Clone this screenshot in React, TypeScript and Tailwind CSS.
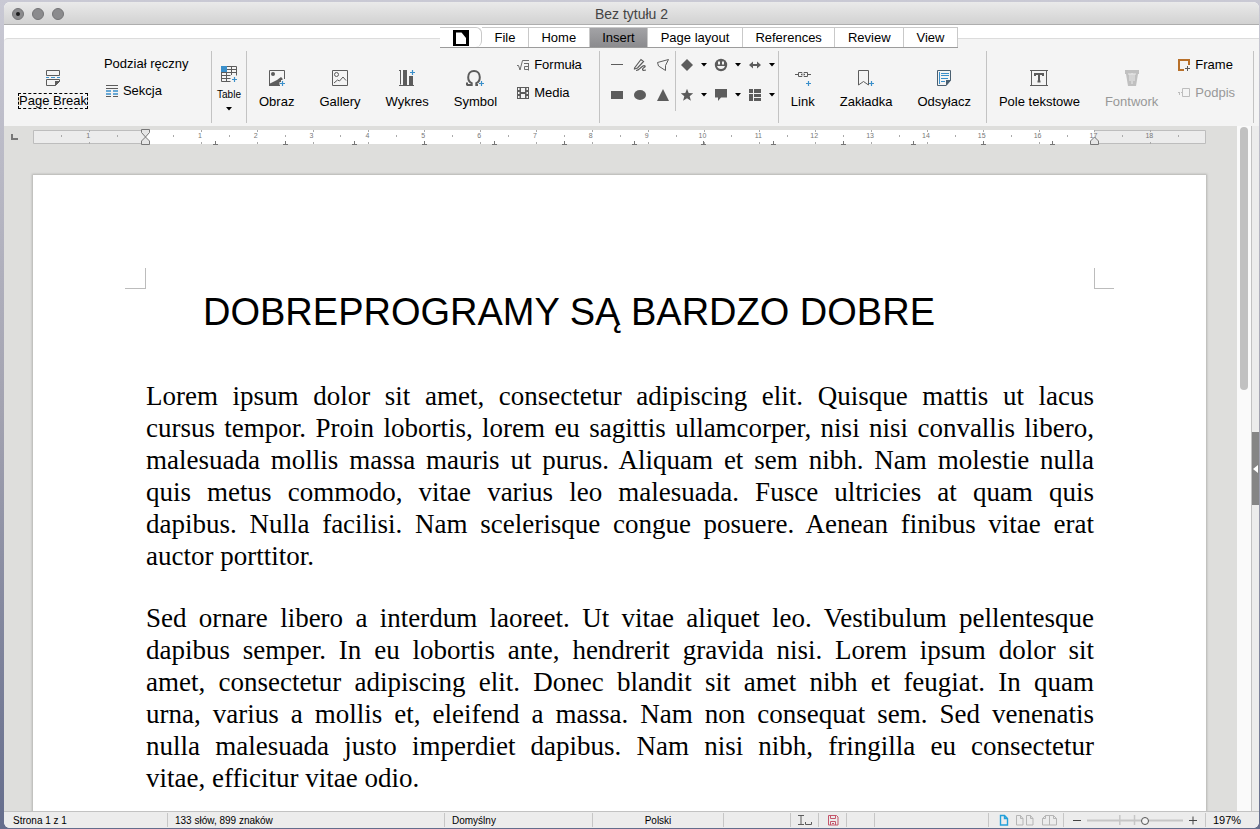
import React from "react";

type IconProps = { children: React.ReactNode; className?: string; box?: string };

function Icon({ children, className = "size-4", box = "0 0 16 16" }: IconProps) {
  return (
    <svg viewBox={box} className={`${className} shrink-0`} fill="none" aria-hidden="true">
      {children}
    </svg>
  );
}

const G = "#5c5c5c";
const B = "#3a8fca";

function Plus({ x, y, c = B }: { x: number; y: number; c?: string }) {
  return <path d={`M${x - 2.5} ${y}h5M${x} ${y - 2.5}v5`} stroke={c} strokeWidth="1.200" />;
}

const icons = {
  pageBreak: (
    <Icon>
      <path d="M1.500 .5h13v5h-13z" stroke={G} />
      <path d="M1 7.500h3M6 7.500h4M12 7.500h3" stroke={B} />
      <path d="M1.500 9.500h13v2l-4 4h-9z" stroke={G} />
      <path d="M10 11h5l-5 5z" fill={G} />
    </Icon>
  ),
  table: (
    <Icon>
      <path d="M.5 .5h15v9M.5 .5v15h9M.5 3.500h15M.5 6.500h15M.5 9.500h9M.5 12.500h9M5.500 0v15M10.500 0v9" stroke={G} />
      <path d="M0 0h6v6H0z" fill={B} />
      <Plus x={13.5} y={13.5} />
    </Icon>
  ),
  image: (
    <Icon>
      <path d="M.5 15.500V.5h15V9" stroke={G} />
      <circle cx="4" cy="4" r="2" fill={G} />
      <path d="M0 16v-2l5-2.500 3-1.500 4-3 1.500 1.500V10H12v2h-1.500v3H11v1z" fill={G} />
      <Plus x={13.5} y={13.5} />
    </Icon>
  ),
  gallery: (
    <Icon>
      <path d="M.5 .5h15v15H.5z" stroke={G} />
      <circle cx="4.500" cy="4.500" r="2" stroke={G} />
      <path d="M2 13l3.500-3 2 1 3.500-4 3 3.500" stroke={G} />
    </Icon>
  ),
  chart: (
    <Icon>
      <path d="M0 .5h1.500M1.500 0v14.500M0 15.500h15" stroke={G} />
      <path d="M4 0h4v15H4zM10 6h4v9h-4z" fill={G} />
      <Plus x={13.5} y={2.5} />
    </Icon>
  ),
  symbol: (
    <Icon className="h-4 w-5" box="0 0 20 16">
      <path
        d="M1.500 15h5.200v-1.800C4.200 12 3.200 9.700 3.200 7.200 3.200 3.500 5.500 1 9 1s5.800 2.500 5.800 6.200c0 2.500-1 4.800-3.500 6V15H13M2 12.500V15"
        stroke={G}
        strokeWidth="2"
      />
      <Plus x={16.5} y={13.5} />
    </Icon>
  ),
  link: (
    <Icon>
      <path d="M0 4.500h3M5 2.500H3.500v4H7v-1M5 2.500h2v1M13 4.500h3M11 2.500h1.500v4H9v-1M11 2.500H9v1M6 4.500h1.500M8.500 4.500H10" stroke={G} />
      <Plus x={13.5} y={13.5} />
    </Icon>
  ),
  bookmark: (
    <Icon>
      <path d="M.5 .5h10v14.500l-5-3.500-5 3.500z" stroke={G} />
      <Plus x={13.5} y={13.5} />
    </Icon>
  ),
  reference: (
    <Icon>
      <path d="M1.500 .5h13v10l-4.500 5H1.500z" stroke="#4a5f70" />
      <path d="M10 10h5l-5 6z" fill="#4a5f70" />
      <path d="M3.500 2v12M5 3.500h8M5 5.500h8M5 8.500h7M5 11.500h4" stroke={B} />
    </Icon>
  ),
  textBox: (
    <Icon className="h-4 w-[18px]" box="0 0 18 16">
      <path d="M1.500 0v16M16.500 0v16M0 .5h18M0 15.500h18" stroke={G} />
      <path d="M5 6V4h8v2M9 4v8M7.500 11.500h3" stroke={G} strokeWidth="2" />
    </Icon>
  ),
  fontwork: (
    <Icon>
      <path d="M1 0h14v4h-1l-2 12H4L2 4H1z" fill="#c0c0c0" />
      <path d="M4 4h8M8 3v11M6 4v7M10 4v7" stroke="#e9e9e9" />
    </Icon>
  ),
  section: (
    <Icon className="size-3" box="0 0 12 12">
      <path d="M0 .5h12M0 3.500h12" stroke={G} />
      <path d="M0 6h5M7 6h5M0 9h5M7 9h5" stroke={B} strokeWidth="1.600" />
      <path d="M0 11.500h5M7 11.500h5" stroke={G} />
    </Icon>
  ),
  formula: (
    <Icon className="size-3" box="0 0 12 12">
      <path d="M0 6.500h1.500l1.500 4.500L5.500 1.500H12M11.500 4v7.500M7 4.500h4.500M11.500 7.500H7.500v3h4" stroke="#6d6d6d" />
    </Icon>
  ),
  media: (
    <Icon className="size-3" box="0 0 12 12">
      <path d="M0 0h12v12H0z" fill={G} />
      <path d="M4 1h4v4H4zM4 7h4v4H4zM1 1h1.500v2H1zM1 5h1.500v2H1zM1 9h1.500v2H1zM9.500 1H11v2H9.500zM9.500 5H11v2H9.500zM9.500 9H11v2H9.500z" fill="#f4f4f4" />
    </Icon>
  ),
  frame: (
    <Icon className="size-3" box="0 0 12 12">
      <path d="M6 11H1V1h10v5" stroke="#b8702a" strokeWidth="2" />
      <path d="M9.500 7v5M7 9.500h5" stroke={G} />
    </Icon>
  ),
  caption: (
    <Icon className="size-3" box="0 0 12 12">
      <path d="M4.500 1.500h7v8h-7zM0 5.500h2M3 5.500h1M1.500 6v2" stroke="#bdbdbd" />
    </Icon>
  ),
  line: (
    <Icon className="size-3.5" box="0 0 14 14">
      <path d="M1 6.500h12" stroke={G} />
    </Icon>
  ),
  pencil: (
    <Icon className="size-3.5" box="0 0 14 14">
      <path d="M1.500 10L8 1.500l2.500 2L4.500 10l-3 1zM3 12.500c2.500 0 3.500-1.500 5-3s3-2.500 4-1.500-2.500 1.800-2.500 3.200 1.500 1.300 3.500 .8" stroke={G} strokeWidth="1.200" />
    </Icon>
  ),
  polygon: (
    <Icon className="size-3.5" box="0 0 14 14">
      <path d="M12.500 1.500l-11 3 1 3.500 7 4.500v-5z" stroke={G} />
    </Icon>
  ),
  rect: (
    <Icon className="size-3.5" box="0 0 14 14">
      <path d="M1 3h12v8H1z" fill={G} />
    </Icon>
  ),
  ellipse: (
    <Icon className="size-3.5" box="0 0 14 14">
      <ellipse cx="7" cy="7" rx="6" ry="5" fill={G} />
    </Icon>
  ),
  triangle: (
    <Icon className="size-3.5" box="0 0 14 14">
      <path d="M7 1l6 12H1z" fill={G} />
    </Icon>
  ),
  diamond: (
    <Icon className="size-3.5" box="0 0 14 14">
      <path d="M7 1l6 6-6 6-6-6z" fill={G} />
    </Icon>
  ),
  smiley: (
    <Icon className="size-3.5" box="0 0 14 14">
      <circle cx="7" cy="7" r="6.200" fill={G} />
      <path d="M4 3.500h2v3H4zM8 3.500h2v3H8zM3 8h8c-.5 2-2 3-4 3s-3.500-1-4-3z" fill="#f4f4f4" />
    </Icon>
  ),
  arrows: (
    <Icon className="size-3.5" box="0 0 14 14">
      <path d="M1 7l4-3.500V6h4V3.500L13 7l-4 3.500V8H5v2.500z" fill={G} />
    </Icon>
  ),
  star: (
    <Icon className="size-3.5" box="0 0 14 14">
      <path d="M7 .8l1.700 4.200 4.500.3-3.500 2.900 1.200 4.500L7 10.200l-3.900 2.500 1.200-4.500L.8 5.300 5.300 5z" fill={G} />
    </Icon>
  ),
  callout: (
    <Icon className="size-3.5" box="0 0 14 14">
      <path d="M1 1h12v8.500H7L4 13V9.500H1z" fill={G} />
    </Icon>
  ),
  flow: (
    <Icon className="size-3.5" box="0 0 14 14">
      <path d="M1 1h4v4H1zM6 1h7v4H6zM1 6h4v7H1zM6 6h7v3H6zM6 10h7v3H6z" fill={G} />
    </Icon>
  ),
};

function BigButton({ icon, label, muted, focused }: { icon: React.ReactNode; label: string; muted?: boolean; focused?: boolean }) {
  return (
    <button
      type="button"
      disabled={muted}
      className={`flex flex-col items-center gap-2 whitespace-nowrap pt-[31px] text-[13px] leading-4 ${muted ? "text-[#989898]" : "text-black"}`}
    >
      {icon}
      <span className={focused ? "outline outline-1 outline-dashed outline-black leading-[14px]" : ""}>{label}</span>
    </button>
  );
}

function SmallButton({ icon, label, muted }: { icon?: React.ReactNode; label: string; muted?: boolean }) {
  return (
    <button
      type="button"
      disabled={muted}
      className={`flex h-4 items-center gap-[5px] whitespace-nowrap text-[13px] leading-4 ${muted ? "text-[#989898]" : "text-black"}`}
    >
      {icon}
      {label}
    </button>
  );
}

function Separator({ short }: { short?: boolean }) {
  return <div className={`mt-3 w-px shrink-0 bg-[#c3c3c3] ${short ? "h-[60px]" : "h-[72px]"}`} />;
}

function Caret() {
  return (
    <svg viewBox="0 0 6 4" className="h-1 w-1.5 shrink-0" aria-hidden="true">
      <path d="M0 0h6L3 3.500z" fill="#000" />
    </svg>
  );
}

const tabs = ["File", "Home", "Insert", "Page layout", "References", "Review", "View"];

function Tabs() {
  return (
    <nav className="relative z-10 -mb-[10px] ml-[436px] flex h-[21px] w-[518px] border-b border-[#9c9c9c] bg-white text-[13px]">
      <button type="button" aria-label="Menu" className="flex w-[42px] items-center justify-center rounded-r-md border-r border-t border-[#c9c9c9]">
        <svg viewBox="0 0 16 16" className="size-4" aria-hidden="true">
          <path d="M0 0h16v16H0z" fill="#000" />
          <path d="M3 2.500h5.500L13 8v6H3z" fill="#fff" />
        </svg>
      </button>
      {tabs.map((t) => (
        <button
          key={t}
          type="button"
          className={`grow whitespace-nowrap border-r border-t border-[#c9c9c9] px-3 leading-5 ${t === "Insert" ? "bg-linear-to-b from-[#a3a3a6] to-[#8b8b8e]" : ""}`}
        >
          {t}
        </button>
      ))}
    </nav>
  );
}

function ShapeButton({ name, icon, menu }: { name: string; icon: React.ReactNode; menu?: boolean }) {
  return (
    <button type="button" aria-label={name} className={`flex h-[30px] items-center ${menu ? "w-[34px] gap-[7px] pl-1" : "w-[23px] justify-center"}`}>
      {icon}
      {menu && <Caret />}
    </button>
  );
}

function Ribbon() {
  return (
    <div className="flex h-[88px] shrink-0 rounded-tl border-t border-[#dcdcdc] bg-[#f4f4f4]">
      <div className="flex w-[207px] shrink-0 gap-4 pl-[15px]">
        <BigButton icon={icons.pageBreak} label="Page Break" focused />
        <div className="flex flex-col gap-[11px] pl-px pt-[17px]">
          <SmallButton label="Podział ręczny" />
          <div className="pl-0.5">
            <SmallButton icon={icons.section} label="Sekcja" />
          </div>
        </div>
      </div>
      <Separator />
      <button type="button" className="flex w-[34px] shrink-0 flex-col items-center pt-[27px] text-[10px]">
        {icons.table}
        <span className="mt-[7px] leading-3">Table</span>
        <span className="mt-1.5 flex">
          <Caret />
        </span>
      </button>
      <Separator />
      <div className="flex gap-[25px] pl-3">
        <BigButton icon={icons.image} label="Obraz" />
        <BigButton icon={icons.gallery} label="Gallery" />
        <BigButton icon={icons.chart} label="Wykres" />
        <BigButton icon={icons.symbol} label="Symbol" />
      </div>
      <div className="flex flex-col gap-3 pl-5 pr-[17px] pt-[18px]">
        <SmallButton icon={icons.formula} label="Formuła" />
        <SmallButton icon={icons.media} label="Media" />
      </div>
      <Separator />
      <div className="grid shrink-0 grid-cols-3 content-start pl-[6px] pt-[11px]">
        <ShapeButton name="Line" icon={icons.line} />
        <ShapeButton name="Freeform" icon={icons.pencil} />
        <ShapeButton name="Polygon" icon={icons.polygon} />
        <ShapeButton name="Rectangle" icon={icons.rect} />
        <ShapeButton name="Ellipse" icon={icons.ellipse} />
        <ShapeButton name="Triangle" icon={icons.triangle} />
      </div>
      <Separator short />
      <div className="grid shrink-0 grid-cols-3 content-start pt-[11px]">
        <ShapeButton name="Basic shapes" icon={icons.diamond} menu />
        <ShapeButton name="Symbol shapes" icon={icons.smiley} menu />
        <ShapeButton name="Block arrows" icon={icons.arrows} menu />
        <ShapeButton name="Stars" icon={icons.star} menu />
        <ShapeButton name="Callouts" icon={icons.callout} menu />
        <ShapeButton name="Flowchart" icon={icons.flow} menu />
      </div>
      <Separator />
      <div className="flex gap-[25px] pl-3 pr-[15px]">
        <BigButton icon={icons.link} label="Link" />
        <BigButton icon={icons.bookmark} label="Zakładka" />
        <BigButton icon={icons.reference} label="Odsyłacz" />
      </div>
      <Separator />
      <div className="flex gap-[25px] px-3">
        <BigButton icon={icons.textBox} label="Pole tekstowe" />
        <BigButton icon={icons.fontwork} label="Fontwork" muted />
      </div>
      <div className="flex flex-1 flex-col gap-3 pl-2 pt-[18px]">
        <SmallButton icon={icons.frame} label="Frame" />
        <SmallButton icon={icons.caption} label="Podpis" muted />
      </div>
      <Separator />
      <div className="w-[5px] shrink-0" />
    </div>
  );
}

const CM = 55.85;

function Ruler() {
  const origin = 112;
  const marks: number[] = [];
  for (let i = -1; i <= 18; i++) marks.push(i);
  const halves: number[] = [];
  for (let i = -2; i <= 18; i++) halves.push(i + 0.5);
  const stops: number[] = [];
  for (let i = 1; i <= 13; i++) stops.push(i);
  return (
    <svg width="1173" height="16" className="block h-4" role="img" aria-label="Ruler">
      <path d="M.5 1.500h1172v13H.5z" fill="#ececec" stroke="#bdbdbd" />
      <path d="M112 1h949v14H112z" fill="#fff" />
      {marks.map((n) =>
        n === 0 ? null : (
          <g key={n}>
            <path d={`M${Math.round(origin + n * CM) + 0.5} 1v2M${Math.round(origin + n * CM) + 0.5} 13v2`} stroke="#aaa" />
            <text x={origin + n * CM - 1} y="9" textAnchor="middle" fontSize="7" fill="#777">
              {Math.abs(n)}
            </text>
          </g>
        ),
      )}
      {halves.map((n) => (
        <path key={n} d={`M${Math.round(origin + n * CM) + 0.5} 6v2`} stroke="#aaa" />
      ))}
      {stops.map((n) => (
        <path key={n} d={`M${Math.round(origin + n * 69.8) + 0.5} 12v3M${Math.round(origin + n * 69.8) - 2} 15.500h5`} stroke="#777" />
      ))}
      <path d="M108.500 .5h8v3l-4 4.500 4 4v3.500h-8V12l4-4-4-4.500z" fill="#e6e6e6" stroke="#777" />
      <path d="M1061.500 8l4 4v3.500h-8V12z" fill="#e6e6e6" stroke="#777" />
    </svg>
  );
}

function StatusCell({ children, className = "" }: { children?: React.ReactNode; className?: string }) {
  return <div className={`my-px flex shrink-0 items-center border-r border-[#c6c6c6] ${className}`}>{children}</div>;
}

function StatusBar() {
  return (
    <footer className="flex h-[17px] shrink-0 whitespace-nowrap rounded-b border-t border-[#c2c2c2] bg-[#ececec] text-[10px] leading-4 text-black">
      <StatusCell className="w-[164px] pl-[9px] pt-px">Strona 1 z 1</StatusCell>
      <StatusCell className="w-[277px] pl-[7px] pt-px">133 słów, 899 znaków</StatusCell>
      <StatusCell className="w-[148px] pl-[7px] pt-px">Domyślny</StatusCell>
      <StatusCell className="w-[131px] justify-center pt-px">Polski</StatusCell>
      <StatusCell className="w-[67px]" />
      <StatusCell className="w-7 justify-center">
        <Icon className="h-3 w-4" box="0 0 16 12">
          <path d="M1 1.500h6M4 1.500v9M1 10.500h6M8.500 8v2.500h6V8" stroke={G} />
        </Icon>
      </StatusCell>
      <StatusCell className="w-7 justify-center">
        <Icon className="size-3" box="0 0 12 12">
          <path d="M1.500 1.500h8l1.500 1.500v8H1.500zM3.500 1.500v3h5v-3M3.500 11V7.500h5V11M5 9.500h2" stroke="#c4566b" />
        </Icon>
      </StatusCell>
      <StatusCell className="w-7" />
      <StatusCell className="flex-1" />
      <StatusCell className="w-[75px] justify-center gap-0.5 pl-1">
        <button type="button" aria-label="Single page" className="flex">
          <Icon className="h-3 w-[10px]" box="0 0 10 12">
            <path d="M1.500 1.500h4l3 3v6.500h-7zM5.500 1.500v3h3" stroke="#23a0da" strokeWidth="1.400" />
          </Icon>
        </button>
        <button type="button" aria-label="Multiple pages" className="ml-1 flex">
          <Icon className="h-3 w-5" box="0 0 20 12">
            <path d="M1.500 1.500h4l2.500 3v6.500H1.500zM5.500 1.500v3H8M11.500 1.500h4l2.500 3v6.500h-6.500zM15.500 1.500v3H18" stroke="#b5b5b5" />
          </Icon>
        </button>
        <button type="button" aria-label="Book view" className="ml-1 flex">
          <Icon className="h-3 w-[17px]" box="0 0 17 12">
            <path d="M8.500 1.500h-4l-3 3v6.500h7zM8.500 1.500h4l3 3v6.500h-7zM4.500 1.500v3h-3M12.500 1.500v3h3" stroke="#b5b5b5" />
          </Icon>
        </button>
      </StatusCell>
      <StatusCell className="w-[142px] gap-1.5 pl-[9px]">
        <button type="button" aria-label="Zoom out" className="flex">
          <Icon className="h-3 w-2" box="0 0 8 12">
            <path d="M0 6.500h8" stroke="#444" />
          </Icon>
        </button>
        <div className="relative flex h-3 flex-1 items-center">
          <svg viewBox="0 0 98 12" preserveAspectRatio="none" className="absolute inset-0 h-3 w-full" aria-hidden="true">
            <path d="M0 6.500h98" stroke="#c6c6c6" strokeWidth="2" />
            <path d="M33.500 1v10M48.500 1v10" stroke="#c6c6c6" strokeWidth="1.500" />
          </svg>
          <input
            type="range"
            aria-label="Zoom"
            min={0}
            max={100}
            defaultValue={61}
            className="relative mt-px h-2 w-full appearance-none bg-transparent [&::-webkit-slider-thumb]:size-2 [&::-webkit-slider-thumb]:appearance-none [&::-webkit-slider-thumb]:rounded-full [&::-webkit-slider-thumb]:border [&::-webkit-slider-thumb]:border-[#555] [&::-webkit-slider-thumb]:bg-[#f4f4f4]"
          />
        </div>
        <button type="button" aria-label="Zoom in" className="flex pr-2">
          <Icon className="h-3 w-2" box="0 0 8 12">
            <path d="M0 6.500h8M4 2.500v8" stroke="#444" />
          </Icon>
        </button>
      </StatusCell>
      <div className="w-[53px] shrink-0 pl-[7px] text-[11px]">197%</div>
    </footer>
  );
}

const paragraphs = [
  [
    "Lorem ipsum dolor sit amet, consectetur adipiscing elit. Quisque mattis ut lacus",
    "cursus tempor. Proin lobortis, lorem eu sagittis ullamcorper, nisi nisi convallis libero,",
    "malesuada mollis massa mauris ut purus. Aliquam et sem nibh. Nam molestie nulla",
    "quis metus commodo, vitae varius leo malesuada. Fusce ultricies at quam quis",
    "dapibus. Nulla facilisi. Nam scelerisque congue posuere. Aenean finibus vitae erat",
    "auctor porttitor.",
  ],
  [
    "Sed ornare libero a interdum laoreet. Ut vitae aliquet leo. Vestibulum pellentesque",
    "dapibus semper. In eu lobortis ante, hendrerit gravida nisi. Lorem ipsum dolor sit",
    "amet, consectetur adipiscing elit. Donec blandit sit amet nibh et feugiat. In quam",
    "urna, varius a mollis et, eleifend a massa. Nam non consequat sem. Sed venenatis",
    "nulla malesuada justo imperdiet dapibus. Nam nisi nibh, fringilla eu consectetur",
    "vitae, efficitur vitae odio.",
  ],
];

function Document() {
  return (
    <div className="flex min-h-0 flex-1 bg-[#dededc]">
      <div className="w-[29px] shrink-0 pl-[7px] pt-2">
        <svg viewBox="0 0 8 7" className="h-[7px] w-2" aria-hidden="true">
          <path d="M1 0v5h6" stroke="#777" strokeWidth="2" fill="none" />
        </svg>
      </div>
      <div className="flex min-w-0 flex-1 flex-col pt-[3px]">
        <div className="h-4 shrink-0 overflow-hidden">
          <Ruler />
        </div>
        <main className="mt-[30px] min-h-0 flex-1 overflow-hidden bg-white shadow-[0_0_2px_1px_#b4b4b2]">
          <div className="flex justify-between px-[92px] pt-[93px]">
            <div className="size-[21px] border-b border-r border-[#bcbcbc]" />
            <div className="h-[21px] w-5 border-b border-l border-[#bcbcbc]" />
          </div>
          <article className="pl-[113px] pr-28 text-black">
            <h1 className="pl-[57px] font-['Liberation_Sans',Arial,sans-serif] text-[38px] leading-[46px]">
              DOBREPROGRAMY SĄ BARDZO DOBRE
            </h1>
            <div className="mt-[45px] flex flex-col gap-[30px] font-['Liberation_Serif','Times_New_Roman',serif] text-[27px] leading-8">
              {paragraphs.map((lines) => (
                <p key={lines[0]}>
                  {lines.map((line, i) => (
                    <span key={line} className={i < lines.length - 1 ? "block text-justify [text-align-last:justify]" : "block"}>
                      {line}{" "}
                    </span>
                  ))}
                </p>
              ))}
            </div>
          </article>
        </main>
      </div>
      <div className="w-[31px] shrink-0" />
      <div className="w-[14px] shrink-0 bg-[#fafafa] px-[3px] pt-px">
        <div className="h-[263px] w-2 rounded-full bg-[#c1c1c1]" />
      </div>
      <div className="flex w-2 shrink-0 flex-col justify-center border-l border-[#c2c2c2] bg-[#ececec]">
        <button type="button" aria-label="Show sidebar" className="flex h-[73px] items-center justify-center bg-[#858585]">
          <svg viewBox="0 0 5 8" className="h-2 w-[5px]" aria-hidden="true">
            <path d="M5 0v8L0 4z" fill="#fff" />
          </svg>
        </button>
      </div>
    </div>
  );
}

export default function App() {
  return (
    <div className="flex h-screen bg-linear-to-b from-[#c9c9d4] via-[#a2a2b0] to-[#656d8c] pb-px pl-1 pr-px pt-0.5 font-['Liberation_Sans',Arial,sans-serif]">
      <div className="flex min-w-0 flex-1 flex-col overflow-hidden rounded-md bg-white">
        <header className="grid h-[23px] shrink-0 grid-cols-[1fr_auto_1fr] items-center border-b border-[#aeaeae] bg-linear-to-b from-[#eaeaea] to-[#d2d2d2] text-[14px] text-[#444]">
          <div className="flex gap-2 pl-2 pt-px">
            <button type="button" aria-label="Close" className="flex size-3 items-center justify-center rounded-full border border-[#747476] bg-[#8b8b8d]">
              <span className="size-1 rounded-full bg-[#1c1c1c]" />
            </button>
            <button type="button" aria-label="Minimize" className="size-3 rounded-full border border-[#747476] bg-[#8b8b8d]" />
            <button type="button" aria-label="Maximize" className="size-3 rounded-full border border-[#747476] bg-[#8b8b8d]" />
          </div>
          <h2 className="pt-0.5">Bez tytułu 2</h2>
        </header>
        <div className="h-0.5 shrink-0" />
        <Tabs />
        <Ribbon />
        <Document />
        <StatusBar />
      </div>
    </div>
  );
}
